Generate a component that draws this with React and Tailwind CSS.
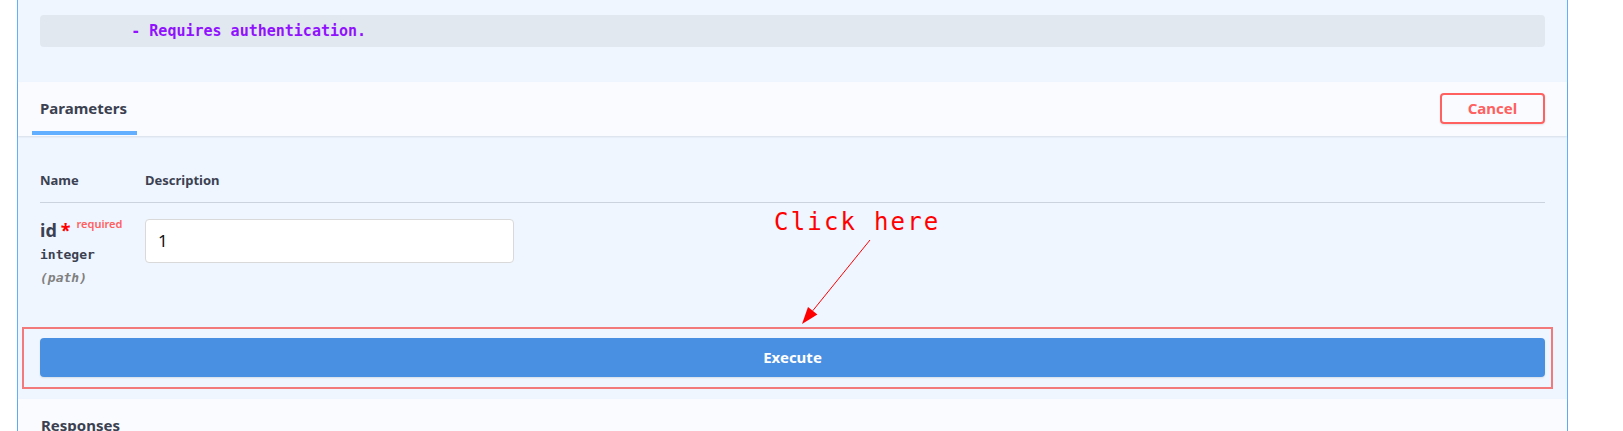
import React from "react";

const sans = { fontFamily: '"Noto Sans", "Open Sans", sans-serif' };
const mono = { fontFamily: '"DejaVu Sans Mono", "Liberation Mono", monospace' };

// red "Click here" annotation lying over the panel
const ClickHereNote = () => (
  <>
    <div
      className="absolute left-[756px] top-[207px] text-[24px] leading-[30px] tracking-[2.2px] text-[#ff0000]"
      style={mono}
    >
      Click here
    </div>
    <svg
      className="absolute left-[760px] top-[230px]"
      width="130"
      height="110"
      viewBox="0 0 130 110"
    >
      <line x1="92" y1="10" x2="34.7" y2="80.8" stroke="#ff0000" strokeWidth="1" />
      <polygon points="24,94 39.4,84.6 30,77" fill="#ff0000" />
    </svg>
    <div className="absolute left-[4px] top-[327px] h-[62px] w-[1531px] border-2 border-[#f37a7a]" />
  </>
);

export default function App() {
  return (
    <div className="w-[1623px] h-[431px] overflow-hidden bg-white" style={sans}>
      <div className="relative ml-[17px] w-[1551px] border-x border-[#61affe] bg-[#eff6ff]">
        <div className="pl-[22px] pr-[22px] pt-[15px] pb-[35px]">
          <div
            className="h-8 rounded bg-[#e2e8f0] pl-[10px] text-[15px] font-bold leading-8 text-[#9012fe] whitespace-pre"
            style={mono}
          >
            {"         - Requires authentication."}
          </div>
        </div>

        <div className="flex h-[54px] items-stretch justify-between bg-[#f9fbff] pl-[14px] pr-[22px] shadow-[0_1px_2px_rgba(0,0,0,0.1)]">
          <div className="mb-px flex items-center border-b-4 border-[#61affe] pl-2 pr-[10px] pt-1 text-[15px] font-bold text-[#3b4151]">
            Parameters
          </div>
          <div className="flex items-center pb-px">
            <button className="h-[31px] w-[105px] rounded border-2 border-[#ff6060] bg-transparent text-[15px] font-bold text-[#ff6060] shadow-[0_1px_2px_rgba(0,0,0,0.1)]">
              Cancel
            </button>
          </div>
        </div>

        <div className="pl-[22px] pr-[22px] pt-9">
          <div className="flex border-b border-[#cbd3de] pb-[13px] text-[13px] font-bold leading-[17px] text-[#3b4151]">
            <div className="w-[105px]">Name</div>
            <div>Description</div>
          </div>
          <div className="flex items-start pt-4">
            <div className="w-[105px]">
              <div className="flex items-start text-[#3b4151]">
                <span className="text-[18px] font-bold leading-[22px]">id</span>
                <span className="ml-1 text-[18px] font-bold leading-[22px] text-[#ff0000]">*</span>
                <span className="ml-[6px] -mt-[3px] text-[11px] font-semibold leading-4 text-[#ff6060]">
                  required
                </span>
              </div>
              <div className="mt-[5px] text-[13px] font-bold leading-[17px] text-[#3b4151]" style={mono}>
                integer
              </div>
              <div className="mt-[6px] text-[13px] italic font-bold leading-[17px] text-[#808080]" style={mono}>
                (path)
              </div>
            </div>
            <div className="flex h-11 w-[369px] items-center rounded border border-[#d9d9d9] bg-white pl-3 text-[17px] text-[#111]">
              1
            </div>
          </div>
          <div className="pt-[52px] pb-[22px]">
            <button className="h-[39px] w-full rounded bg-[#4990e2] text-[15px] font-bold text-white shadow-[0_1px_2px_rgba(0,0,0,0.1)]">
              Execute
            </button>
          </div>
        </div>

        <div className="h-[60px] bg-[#f9fbff] pl-[23px] pt-[15px] shadow-[0_1px_2px_rgba(0,0,0,0.1)]">
          <div className="text-[15px] font-bold text-[#3b4151]">Responses</div>
        </div>

        <ClickHereNote />
      </div>
    </div>
  );
}
